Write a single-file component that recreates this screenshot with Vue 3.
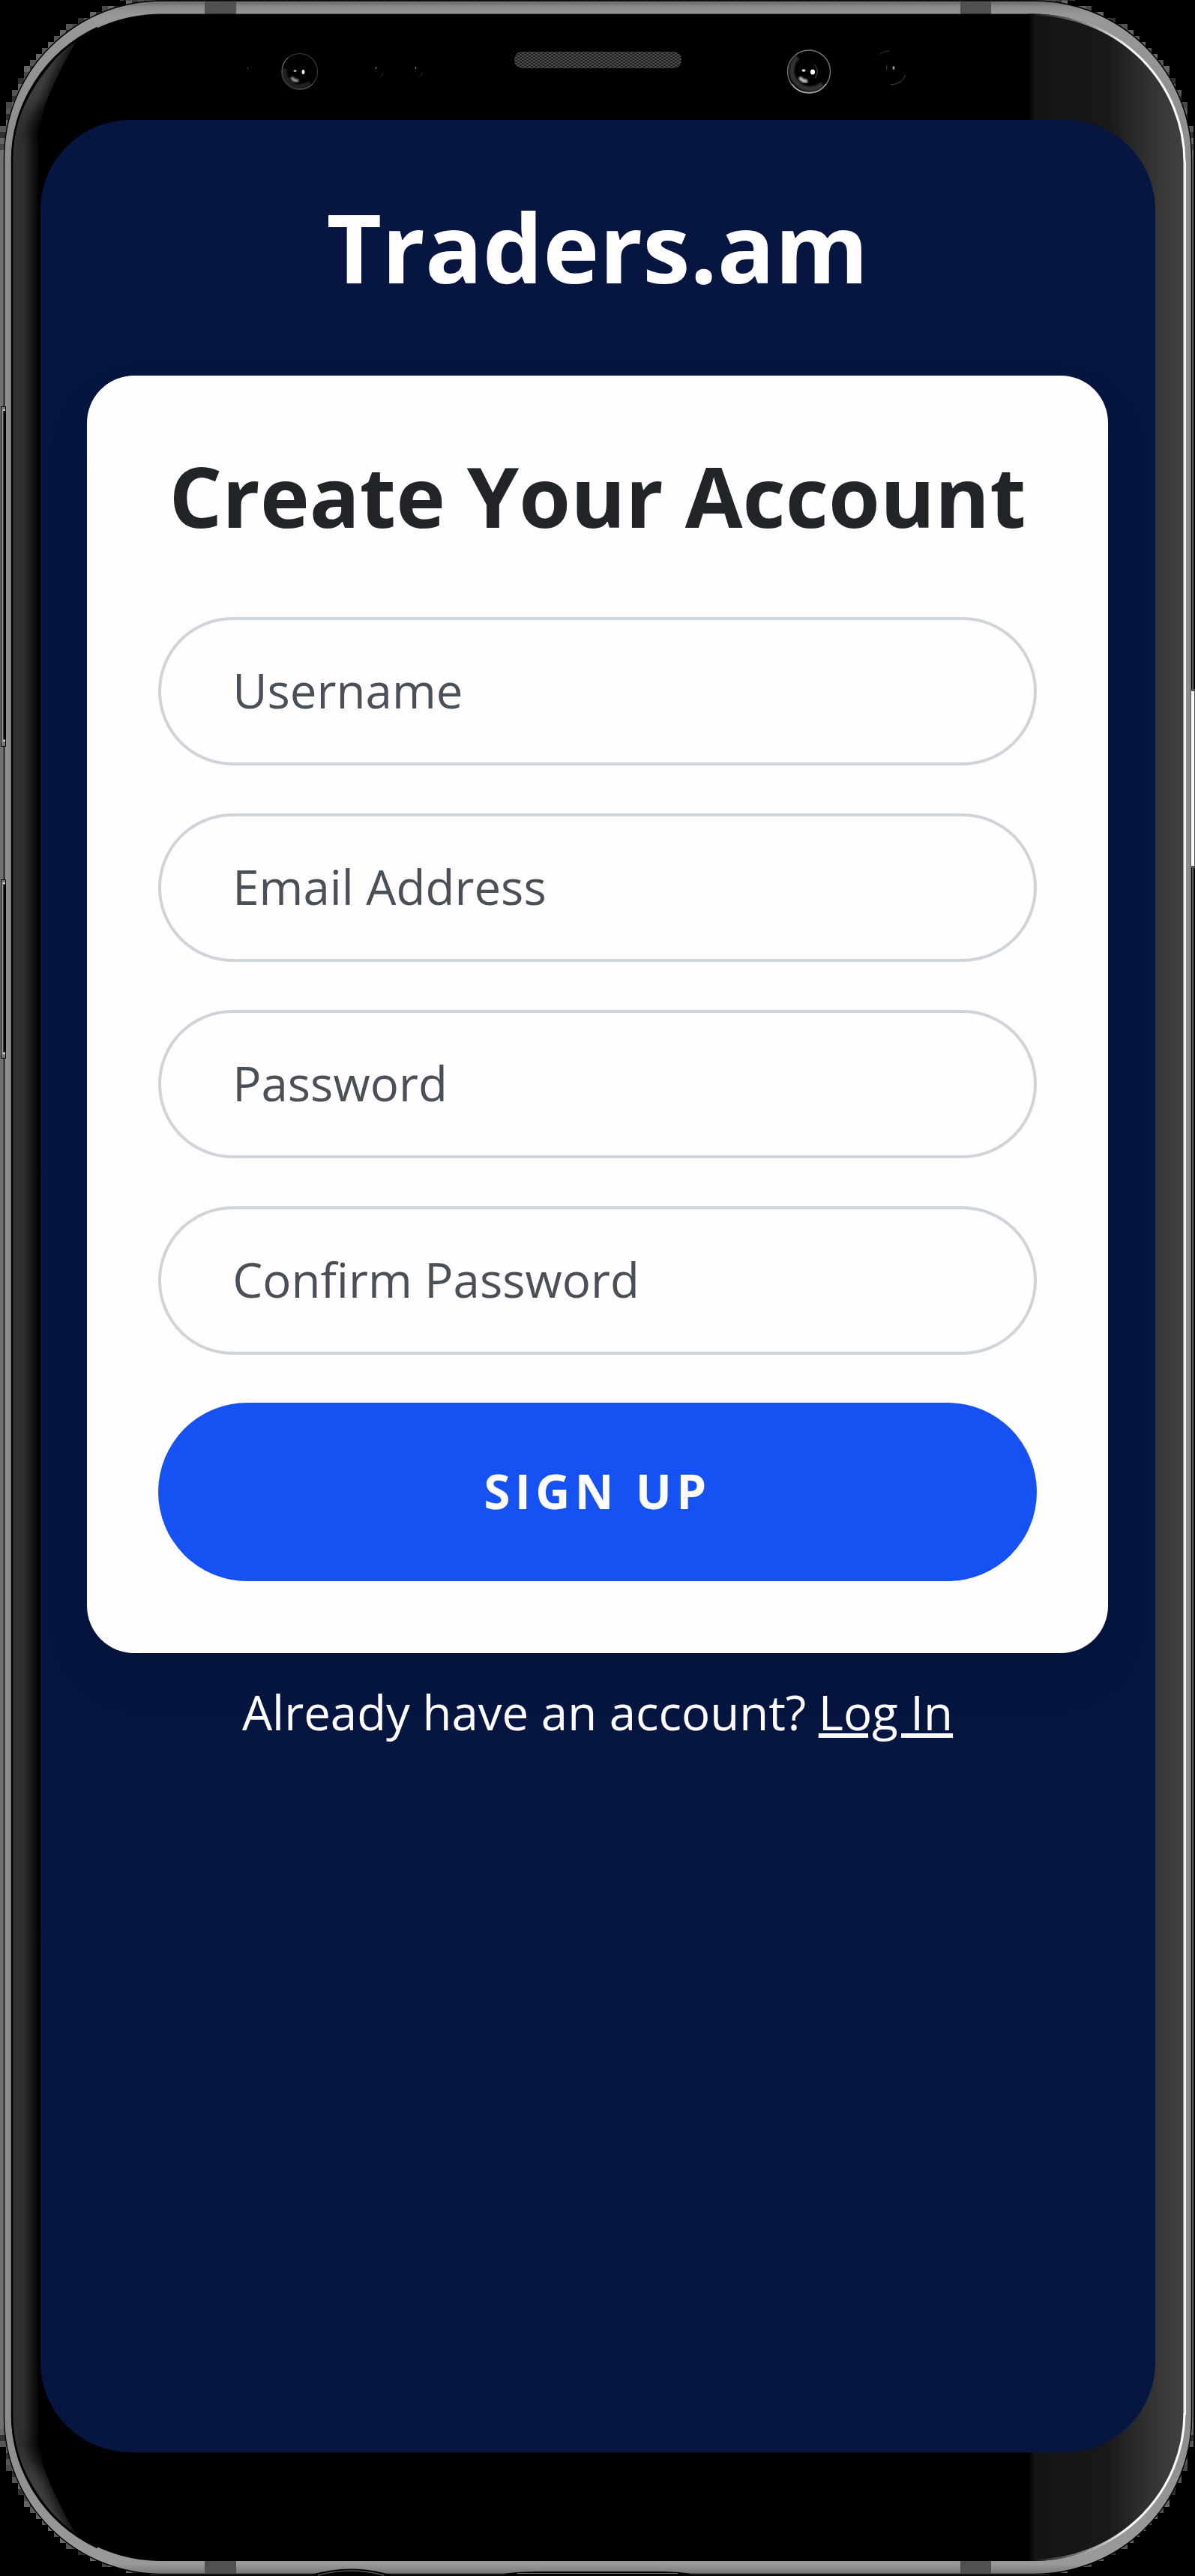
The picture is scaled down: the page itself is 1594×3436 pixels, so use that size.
<script setup>
import { ref } from 'vue'

const fields = ref([
  { id: 'username', label: 'Username', type: 'text' },
  { id: 'email', label: 'Email Address', type: 'email' },
  { id: 'password', label: 'Password', type: 'password' },
  { id: 'confirm', label: 'Confirm Password', type: 'password' },
])

// Stepped halo around the rounded corners of the handset
const CELL = 8
const shades = ['#484848', '#666666', '#303030', '#555555']
const halo = []
const radius = 210
for (let row = 0; row < 27; row++) {
  for (let col = 0; col < 27; col++) {
    const x = col * CELL
    const y = row * CELL
    const c = radius + 5
    const far = Math.hypot(c - x, c - y)
    const near = Math.hypot(Math.max(c - x - CELL, 0), Math.max(c - y - CELL, 0))
    if (far > radius && near < radius + 2) {
      const fill = shades[(row * 3 + col) % 4]
      halo.push({ x, y, fill })
      halo.push({ x: 1592 - x - CELL, y, fill })
      halo.push({ x, y: 3432 - y - CELL, fill })
      halo.push({ x: 1592 - x - CELL, y: 3432 - y - CELL, fill })
    }
  }
}
</script>

<template>
  <div class="phone">
    <svg class="frame" viewBox="0 0 1594 3436" width="1594" height="3436" aria-hidden="true">
      <defs>
        <linearGradient id="rimTop" x1="0" y1="0" x2="0" y2="1">
          <stop offset="0" stop-color="#686868" />
          <stop offset="0.0025" stop-color="#8a8a8a" />
          <stop offset="0.0055" stop-color="#989898" />
          <stop offset="0.06" stop-color="#8c8c8c" />
          <stop offset="0.94" stop-color="#8c8c8c" />
          <stop offset="0.996" stop-color="#9a9a9a" />
          <stop offset="1" stop-color="#777" />
        </linearGradient>
        <linearGradient id="leftCurve" gradientUnits="userSpaceOnUse" x1="17" y1="0" x2="53" y2="0">
          <stop offset="0" stop-color="#323232" />
          <stop offset="0.45" stop-color="#2d2d2d" />
          <stop offset="1" stop-color="#000" />
        </linearGradient>
        <linearGradient id="rightCurve" gradientUnits="userSpaceOnUse" x1="1372" y1="0" x2="1579" y2="0">
          <stop offset="0" stop-color="#000" />
          <stop offset="0.04" stop-color="#151515" />
          <stop offset="0.5" stop-color="#181818" />
          <stop offset="0.8" stop-color="#343434" />
          <stop offset="1" stop-color="#424242" />
        </linearGradient>
        <linearGradient id="shineTop" gradientUnits="userSpaceOnUse" x1="1379" y1="18" x2="1500" y2="80">
          <stop offset="0" stop-color="#fff" stop-opacity="0" />
          <stop offset="1" stop-color="#fff" />
        </linearGradient>
        <linearGradient id="shineBottom" gradientUnits="userSpaceOnUse" x1="1379" y1="3416" x2="1500" y2="3354">
          <stop offset="0" stop-color="#fff" stop-opacity="0" />
          <stop offset="1" stop-color="#fff" />
        </linearGradient>
        <linearGradient id="cheek" gradientUnits="userSpaceOnUse" x1="42" y1="110" x2="76" y2="126">
          <stop offset="0" stop-color="#424242" />
          <stop offset="0.4" stop-color="#3a3a3a" />
          <stop offset="1" stop-color="#000" />
        </linearGradient>
        <linearGradient id="cheekFade" gradientUnits="userSpaceOnUse" x1="0" y1="130" x2="0" y2="225">
          <stop offset="0" stop-color="#fff" />
          <stop offset="1" stop-color="#000" />
        </linearGradient>
        <linearGradient id="stripFade" gradientUnits="userSpaceOnUse" x1="0" y1="105" x2="0" y2="3331">
          <stop offset="0" stop-color="#000" />
          <stop offset="0.028" stop-color="#fff" />
          <stop offset="0.972" stop-color="#fff" />
          <stop offset="1" stop-color="#000" />
        </linearGradient>
        <mask id="cheekMask" maskUnits="userSpaceOnUse" x="0" y="30" width="130" height="210">
          <rect x="0" y="30" width="130" height="210" fill="url(#cheekFade)" />
        </mask>
        <mask id="stripMask" maskUnits="userSpaceOnUse" x="0" y="100" width="60" height="3236">
          <rect x="0" y="100" width="60" height="3236" fill="url(#stripFade)" />
        </mask>
        <pattern id="mesh" width="6" height="4" patternUnits="userSpaceOnUse">
          <rect width="6" height="4" fill="#4b4b4b" />
          <rect width="3" height="2" fill="#202020" />
          <rect x="3" y="2" width="3" height="2" fill="#202020" />
        </pattern>
        <filter id="soft" x="-50%" y="-50%" width="200%" height="200%">
          <feGaussianBlur stdDeviation="1" />
        </filter>
        <clipPath id="glass">
          <rect x="17" y="18.5" width="1562" height="3397.5" rx="200" ry="197" />
        </clipPath>
      </defs>

      <rect width="1594" height="3436" fill="#000" />
      <rect v-for="(h, i) in halo" :key="i" :x="h.x" :y="h.y" width="8" height="8" :fill="h.fill" />
      <rect x="0" y="200" width="6" height="3040" fill="#707070" />
      <rect x="1590" y="200" width="2" height="3040" fill="#707070" />
      <path d="M160 .5H1434" stroke="#444" stroke-dasharray="5 2 2 1" />
      <path d="M200 3434.5H1400" stroke="#3a3a3a" />

      <!-- metal rim -->
      <rect x="5.5" y="1" width="1584" height="3432.5" rx="210" fill="url(#rimTop)" stroke="#000" stroke-width="1.4" />
      <rect x="273" y="2" width="42" height="17" fill="#505050" />
      <rect x="1281" y="2" width="41" height="18" fill="#505050" />
      <rect x="273" y="3416" width="42" height="17" fill="#505050" />
      <rect x="1281" y="3416" width="41" height="17" fill="#505050" />
      <path d="M416 3434Q467 3419 520 3434V3436H416Z" fill="#000" />
      <path d="M424 3433Q467 3421 512 3433" fill="none" stroke="#555" stroke-width="1.5" transform="translate(0 2)" />
      <path d="M672 3433Q690 3430 720 3430H880Q905 3430 922 3433V3436H672Z" fill="#000" />
      <path d="M690 3432.5H904" stroke="#777" />

      <!-- glass -->
      <rect x="15" y="18.5" width="1564" height="3397.5" rx="200" ry="197" fill="#000" />
      <g clip-path="url(#glass)">
        <rect x="17" y="100" width="38" height="3236" fill="url(#leftCurve)" mask="url(#stripMask)" />
        <path class="cheek" d="M10 230C18 150 50 95 106 48C84 84 68 118 58 146C55 158 54 185 53 230Z" fill="url(#cheek)" mask="url(#cheekMask)" />
        <g transform="matrix(1 0 0 -1 0 3436)">
          <path class="cheek" d="M10 230C18 150 50 95 106 48C84 84 68 118 58 146C55 158 54 185 53 230Z" fill="url(#cheek)" mask="url(#cheekMask)" />
        </g>
        <rect x="1372" y="18" width="210" height="3400" fill="url(#rightCurve)" />
      </g>
      <path d="M1379 19.5A201 197 0 0 1 1580 216" fill="none" stroke="url(#shineTop)" stroke-width="3" />
      <path d="M1580.2 215V3221" stroke="#aaa" stroke-width="4" />
      <path d="M1580.6 215V3221" stroke="#fff" stroke-width="2.6" />
      <path d="M1379 3415A201 197 0 0 0 1580 3219" fill="none" stroke="url(#shineBottom)" stroke-width="3" />
      <path d="M16 218A201 197 0 0 1 130 37M16 218V3218M16 3218A201 197 0 0 0 130 3398" fill="none" stroke="#000" stroke-width="2.5" />

      <!-- side keys -->
      <g fill="#777" stroke="#000">
        <rect x="1.5" y="542.5" width="6" height="453" />
        <rect x="1.5" y="1173.5" width="6" height="238" />
      </g>
      <path d="M3 546V991M3 1177V1407" stroke="#aaa" />
      <path d="M5.8 548V986M5.8 1180V1403" stroke="#000" stroke-width="2.6" />
      <path d="M4 547H7M4 988H7M4 1178H7M4 1405H7" stroke="#ccc" stroke-width="2" />
      <rect x="1588" y="919" width="6" height="239" fill="#555" />
      <rect x="1589" y="922" width="4" height="233" fill="#fff" />

      <!-- earpiece -->
      <rect x="686" y="69" width="223" height="22" rx="10" fill="url(#mesh)" />

      <!-- front cameras -->
      <g fill="none">
        <circle cx="399.5" cy="95.5" r="24" stroke="#383838" stroke-width="1.2" />
        <path d="M384 77A24 24 0 0 0 417 112" stroke="#777" stroke-width="1" />
        <path d="M380 91A20 20 0 0 0 413 110" stroke="#202020" stroke-width="6" filter="url(#soft)" />
        <path d="M389 103Q392 109 398 107" stroke="#999" stroke-width="4" filter="url(#soft)" />
        <ellipse cx="393.5" cy="94.5" rx="2" ry="1.5" fill="#aaa" />
        <ellipse cx="404.5" cy="96" rx="2" ry="3" fill="#eee" />

        <circle cx="1079" cy="95.5" r="28.5" stroke="#777" stroke-width="1.4" />
        <path d="M1056 112A28.5 28.5 0 0 0 1102 112" stroke="#aaa" stroke-width="1.6" />
        <path d="M1064 76A24 24 0 0 0 1097 112" stroke="#303030" stroke-width="7" filter="url(#soft)" />
        <path d="M1067 103Q1070 109 1077 108" stroke="#bbb" stroke-width="5" filter="url(#soft)" />
        <path d="M1086 86Q1094 94 1087 104" stroke="#333" stroke-width="1.5" />
        <ellipse cx="1072" cy="94" rx="2.5" ry="1.8" fill="#ddd" />
        <ellipse cx="1084" cy="96" rx="3" ry="3.5" fill="#fff" />
      </g>

      <!-- proximity sensors -->
      <g fill="none" stroke="#444">
        <path d="M511 97Q510 101 507 103M563 97Q562 101 559 103" stroke="#2a2a2a" />
        <path d="M501.5 89V92M554.5 89V92" stroke="#777" stroke-width="1.2" />
        <path d="M330.5 90V92" stroke="#555" />
        <path d="M1173 73Q1178 68 1187 68" stroke="#333" />
        <path d="M1208 100Q1204 112 1188 113" stroke="#4a4a4a" />
        <path d="M1183 87Q1182 90 1183 93" stroke="#444" />
        <ellipse cx="1192" cy="90.5" rx="1.5" ry="2.5" fill="#999" stroke="none" />
      </g>
    </svg>

    <main class="screen">
      <h1 class="brand">Traders.am</h1>
      <form class="card" @submit.prevent>
        <h2 class="heading">Create Your Account</h2>
        <div class="fields">
          <input
            v-for="f in fields"
            :key="f.id"
            class="field"
            :type="f.type"
            :placeholder="f.label"
            :aria-label="f.label"
          />
          <button class="submit" type="submit">SIGN UP</button>
        </div>
      </form>
      <p class="login">Already have an account? <a class="link" href="#">Log In</a></p>
    </main>
  </div>
</template>

<style>
body {
  margin: 0;
  background: #000;
}
</style>

<style scoped>
.phone {
  position: relative;
  box-sizing: border-box;
  width: 1594px;
  height: 3436px;
  padding: 160px 53px 165px 54px;
  overflow: hidden;
  background: #000;
  font-family: "Open Sans", sans-serif;
}

.frame {
  position: absolute;
  inset: 0;
  display: block;
}

.cheek {
  mix-blend-mode: lighten;
}

.screen {
  position: relative;
  box-sizing: border-box;
  height: 100%;
  padding: 93px 63px 0 62px;
  overflow: hidden;
  border-radius: 120px;
  background: #061641;
}

.brand {
  margin: 0 0 96px;
  color: #fffdfe;
  font-size: 127.2px;
  font-weight: 700;
  line-height: 152px;
  text-align: center;
  white-space: nowrap;
}

.card {
  box-sizing: border-box;
  height: 1703.5px;
  padding: 94px 95.2px 0;
  border-radius: 63px;
  background: #fffdfe;
  box-shadow: 0 32px 64px -8px rgba(0, 0, 0, 0.13);
}

.heading {
  margin: 0 -20px 95px;
  color: #212529;
  font-size: 111.3px;
  font-weight: 700;
  line-height: 133px;
  text-align: center;
  white-space: nowrap;
}

.fields {
  display: flex;
  flex-direction: column;
  gap: 63.7px;
}

.field {
  box-sizing: border-box;
  width: 100%;
  height: 198.3px;
  margin: 0;
  padding: 0 95px 3px;
  border: 4px solid #ced4da;
  border-radius: 100px;
  outline: none;
  background: transparent;
  color: #495057;
  font: 400 63.6px "Open Sans", sans-serif;
}

.field::placeholder {
  color: #495057;
  opacity: 1;
}

.submit {
  height: 238.5px;
  margin: 0;
  padding: 0 0 3px;
  border: 0;
  border-radius: 120px;
  background: #1652f3;
  color: #fffdfe;
  font: 700 63.6px "Open Sans", sans-serif;
  letter-spacing: 6.4px;
}

.login {
  margin: 31.5px 0 0;
  color: #fffdfe;
  font-size: 63.6px;
  line-height: 95px;
  text-align: center;
  white-space: nowrap;
}

.link {
  color: inherit;
  text-decoration: underline;
}
</style>
